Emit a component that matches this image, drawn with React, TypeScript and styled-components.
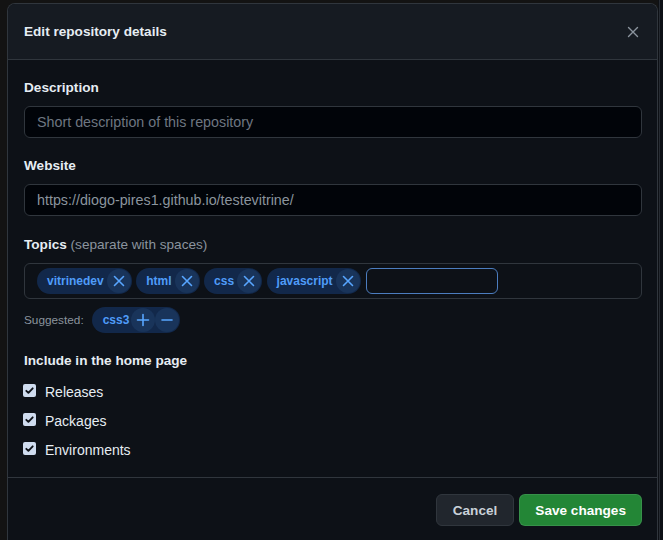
import React from "react";
import styled, { createGlobalStyle } from "styled-components";

const GlobalStyle = createGlobalStyle`
  html, body { margin: 0; padding: 0; background: #131313; }
  body { font-family: "Liberation Sans", Arial, sans-serif; -webkit-font-smoothing: antialiased; }
  * { box-sizing: border-box; }
`;

const Page = styled.div`
  display: flex;
  width: 663px;
  height: 540px;
  overflow: hidden;
  padding-top: 3px;
  background: #131313;
`;

const LeftGutter = styled.div`
  width: 7px;
  flex: none;
`;

const RightStrip = styled.div`
  flex: 1;
  margin-top: -3px;
  background: linear-gradient(to right, #0d1015 0 1px, #272c33 1px 2px, #0d1015 2px);
`;

const Dialog = styled.div`
  width: 651px;
  flex: none;
  height: 560px;
  display: flex;
  flex-direction: column;
  border: 1px solid #30363d;
  border-bottom: none;
  border-radius: 8px 8px 0 0;
  background: #0d1117;
  overflow: hidden;
`;

const Header = styled.div`
  height: 56px;
  flex: none;
  display: flex;
  align-items: center;
  justify-content: space-between;
  padding: 0 8px 0 16px;
  background: #161b22;
  border-bottom: 1px solid #30363d;
`;

const Title = styled.h1`
  margin: 0;
  font-size: 13.6px;
  font-weight: 700;
  color: #e6edf3;
`;

const CloseButton = styled.button`
  width: 32px;
  height: 32px;
  display: flex;
  align-items: center;
  justify-content: center;
  border: none;
  background: transparent;
  color: #8b949e;
  padding: 0;
`;

const Body = styled.div`
  padding: 18px 15px 15px 16px;
  display: flex;
  flex-direction: column;
`;

const Group = styled.div<{ $gap?: number }>`
  display: flex;
  flex-direction: column;
  margin-top: ${(p) => p.$gap ?? 0}px;
`;

const Label = styled.label`
  font-size: 13.6px;
  line-height: 20px;
  font-weight: 700;
  color: #e6edf3;
  margin-bottom: 8px;
`;

const LabelNote = styled.span`
  font-weight: 400;
  color: #8b949e;
  font-size: 13.6px;
`;

const TextInput = styled.div<{ $value?: boolean }>`
  height: 32px;
  display: flex;
  align-items: center;
  padding: 0 12px;
  border: 1px solid #30363d;
  border-radius: 6px;
  background: #010409;
  font-size: 14.3px;
  color: ${(p) => (p.$value ? "#8b949e" : "#6e7681")};
`;

const TopicsBox = styled.div`
  height: 36px;
  display: flex;
  align-items: center;
  gap: 4.5px;
  padding: 0 12px;
  border: 1px solid #30363d;
  border-radius: 6px;
  background: #0d1117;
`;

const Chip = styled.span<{ $pad?: number }>`
  height: 26px;
  display: inline-flex;
  align-items: center;
  padding-left: ${(p) => p.$pad ?? 10}px;
  padding-right: 1px;
  border-radius: 13px;
  background: #12284a;
  color: #4f9cf9;
  font-size: 12px;
  font-weight: 700;
`;

const ChipText = styled.span<{ $space?: number }>`
  margin-right: ${(p) => p.$space ?? 3}px;
`;

const ChipButton = styled.span`
  width: 24px;
  height: 24px;
  border-radius: 50%;
  display: inline-flex;
  align-items: center;
  justify-content: center;
  background: #19345a;
  color: #58a6ff;
`;

const TopicField = styled.span`
  width: 132px;
  height: 26px;
  margin-left: 1px;
  border: 1px solid #4c7dbf;
  border-radius: 6px;
  background: #0d1117;
`;

const SuggestRow = styled.div`
  margin-top: 8px;
  display: flex;
  align-items: center;
  gap: 8px;
`;

const SuggestLabel = styled.span`
  font-size: 11.8px;
  color: #8b949e;
`;

const CheckRow = styled.label<{ $first?: boolean }>`
  height: 24px;
  display: flex;
  align-items: center;
  gap: 9px;
  margin-top: ${(p) => (p.$first ? 1 : 5)}px;
  margin-left: -1px;
  font-size: 14px;
  color: #e6edf3;
`;

const CheckBox = styled.span`
  width: 13px;
  height: 13px;
  margin-top: -3px;
  border-radius: 2px;
  background: #cfdcef;
  display: inline-flex;
  align-items: center;
  justify-content: center;
`;

const Footer = styled.div`
  border-top: 1px solid #30363d;
  padding: 16px 15px;
  display: flex;
  justify-content: flex-end;
  gap: 5px;
`;

const Button = styled.button<{ $primary?: boolean }>`
  height: 32px;
  padding: 0 ${(p) => (p.$primary ? 15 : 16)}px;
  border-radius: 6px;
  font-family: inherit;
  font-size: 13.6px;
  font-weight: 700;
  border: 1px solid ${(p) => (p.$primary ? "rgba(240,246,252,0.1)" : "#30363d")};
  background: ${(p) => (p.$primary ? "#238636" : "#21262d")};
  color: ${(p) => (p.$primary ? "#ffffff" : "#c9d1d9")};
`;

const XIcon = ({ size = 16, w = 1.5 }: { size?: number; w?: number }) => (
  <svg width={size} height={size} viewBox="0 0 16 16" fill="none" stroke="currentColor" strokeWidth={w} strokeLinecap="round">
    <path d="M3.5 3.5l9 9M12.5 3.5l-9 9" />
  </svg>
);

const PlusIcon = () => (
  <svg width={16} height={16} viewBox="0 0 16 16" fill="none" stroke="currentColor" strokeWidth={1.6} strokeLinecap="round">
    <path d="M8 2.5v11M2.5 8h11" />
  </svg>
);

const DashIcon = () => (
  <svg width={16} height={16} viewBox="0 0 16 16" fill="none" stroke="currentColor" strokeWidth={1.6} strokeLinecap="round">
    <path d="M3 8h10" />
  </svg>
);

const CheckMark = () => (
  <svg width={11} height={11} viewBox="0 0 12 12" fill="none" stroke="#0d1117" strokeWidth={2} strokeLinecap="round" strokeLinejoin="round">
    <path d="M2.5 6.3l2.3 2.3 4.7-5" />
  </svg>
);

const topics = ["vitrinedev", "html", "css", "javascript"];
const options = ["Releases", "Packages", "Environments"];

export default function App() {
  return (
    <>
      <GlobalStyle />
      <Page>
        <LeftGutter />
        <Dialog>
          <Header>
            <Title>Edit repository details</Title>
            <CloseButton aria-label="Close">
              <XIcon size={16} w={1.4} />
            </CloseButton>
          </Header>
          <Body>
            <Group>
              <Label>Description</Label>
              <TextInput>Short description of this repository</TextInput>
            </Group>
            <Group $gap={18}>
              <Label>Website</Label>
              <TextInput $value>https://diogo-pires1.github.io/testevitrine/</TextInput>
            </Group>
            <Group $gap={19}>
              <Label>
                Topics <LabelNote>(separate with spaces)</LabelNote>
              </Label>
              <TopicsBox>
                {topics.map((t) => (
                  <Chip key={t}>
                    <ChipText>{t}</ChipText>
                    <ChipButton>
                      <XIcon size={16} w={1.6} />
                    </ChipButton>
                  </Chip>
                ))}
                <TopicField />
              </TopicsBox>
              <SuggestRow>
                <SuggestLabel>Suggested:</SuggestLabel>
                <Chip $pad={11}>
                  <ChipText $space={2}>css3</ChipText>
                  <ChipButton>
                    <PlusIcon />
                  </ChipButton>
                  <ChipButton>
                    <DashIcon />
                  </ChipButton>
                </Chip>
              </SuggestRow>
            </Group>
            <Group $gap={18}>
              <Label>Include in the home page</Label>
              {options.map((o, i) => (
                <CheckRow key={o} $first={i === 0}>
                  <CheckBox>
                    <CheckMark />
                  </CheckBox>
                  {o}
                </CheckRow>
              ))}
            </Group>
          </Body>
          <Footer>
            <Button>Cancel</Button>
            <Button $primary>Save changes</Button>
          </Footer>
        </Dialog>
        <RightStrip />
      </Page>
    </>
  );
}
